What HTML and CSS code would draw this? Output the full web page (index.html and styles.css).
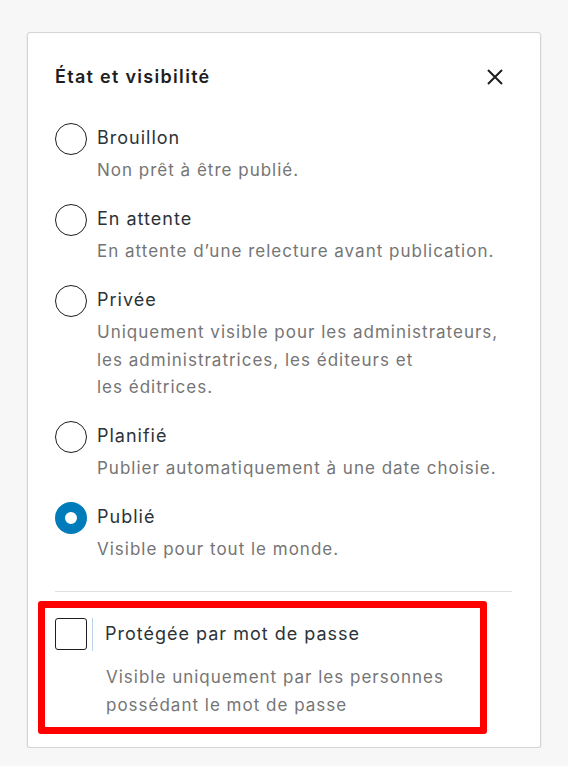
FILE: index.html
```html
<!DOCTYPE html>
<html lang="fr">
<head>
  <meta charset="UTF-8">
  <meta name="viewport" content="width=device-width, initial-scale=1.0">
  <title>État et visibilité</title>
  <link rel="stylesheet" href="styles.css">
</head>
<body>
  <!-- Panneau d'état -->
  <div class="panel">
    <div class="panel-header">
      <h2 class="panel-title">État et visibilité</h2>
      <button class="close-btn" type="button" aria-label="Fermer">
        <svg width="24" height="24" viewBox="0 0 24 24"><path d="M5 5l14 14M19 5L5 19" stroke="#1e1e1e" stroke-width="2" fill="none"/></svg>
      </button>
    </div>

    <div class="option">
      <span class="radio"></span>
      <div class="option-text">
        <div class="option-label">Brouillon</div>
        <div class="option-desc">Non prêt à être publié.</div>
      </div>
    </div>

    <div class="option">
      <span class="radio"></span>
      <div class="option-text">
        <div class="option-label">En attente</div>
        <div class="option-desc">En attente d’une relecture avant publication.</div>
      </div>
    </div>

    <div class="option">
      <span class="radio"></span>
      <div class="option-text">
        <div class="option-label">Privée</div>
        <div class="option-desc">Uniquement visible pour les administrateurs,<br>les administratrices, les éditeurs et<br>les éditrices.</div>
      </div>
    </div>

    <div class="option">
      <span class="radio"></span>
      <div class="option-text">
        <div class="option-label">Planifié</div>
        <div class="option-desc">Publier automatiquement à une date choisie.</div>
      </div>
    </div>

    <div class="option">
      <span class="radio checked"></span>
      <div class="option-text">
        <div class="option-label">Publié</div>
        <div class="option-desc">Visible pour tout le monde.</div>
      </div>
    </div>

    <hr class="divider">

    <!-- Mot de passe -->
    <div class="password-box">
      <div class="password-row">
        <span class="checkbox"></span>
        <span class="checkbox-sep"></span>
        <span class="option-label">Protégée par mot de passe</span>
      </div>
      <div class="password-desc">Visible uniquement par les personnes<br>possédant le mot de passe</div>
    </div>
  </div>
</body>
</html>
```

FILE: styles.css
```css
/* Page */
body {
  margin: 0;
  background-color: #f7f7f7;
  font-family: Inter, "Noto Sans", Arial, sans-serif;
  color: #2c3338;
}

.panel {
  width: 514px;
  box-sizing: border-box;
  margin: 32px 0 0 27px;
  padding: 0 28px 13px 27px;
  background-color: #fff;
  border: 1px solid #d4d4d4;
  border-radius: 3px;
  box-shadow: 0 1px 2px rgba(0, 0, 0, 0.12);
}

.panel-header {
  display: flex;
  align-items: center;
  justify-content: space-between;
  padding-top: 32px;
  margin-bottom: 34px;
}

.panel-title {
  margin: 0;
  font-size: 18px;
  line-height: 24px;
  font-weight: 600;
  letter-spacing: 1.3px;
  color: #1e1e1e;
}

.close-btn {
  display: flex;
  padding: 0;
  margin-right: 5px;
  border: none;
  background: none;
  cursor: pointer;
}

/* Options radio */
.option {
  display: flex;
  align-items: flex-start;
  gap: 10px;
  margin-bottom: 19.5px;
}

.radio {
  flex: none;
  width: 32px;
  height: 32px;
  box-sizing: border-box;
  border: 1.5px solid #1e1e1e;
  border-radius: 50%;
}

.radio.checked {
  border: 10.5px solid #007cba;
  background-color: #fff;
}

.option-text {
  padding-top: 3px;
}

.option-label {
  font-size: 18px;
  line-height: 24px;
  letter-spacing: 1px;
  color: #2c3338;
}

.option-desc {
  margin-top: 7px;
  font-size: 17px;
  line-height: 27.5px;
  letter-spacing: 1px;
  color: #757575;
}

.divider {
  margin: 27px 0 9px;
  border: none;
  border-top: 1px solid #e0e0e0;
}

/* Zone mise en évidence */
.password-box {
  width: 449px;
  box-sizing: border-box;
  margin-left: -17px;
  padding: 10px 0 8px 10px;
  border: 7px solid #ff0000;
  border-radius: 3px;
}

.password-row {
  display: flex;
  align-items: center;
}

.checkbox {
  flex: none;
  width: 32px;
  height: 32px;
  box-sizing: border-box;
  border: 1.5px solid #1e1e1e;
  border-radius: 3px;
}

.checkbox-sep {
  width: 1px;
  height: 33px;
  margin: 0 12px 0 5px;
  background-color: #b8d3ea;
}

.password-desc {
  margin: 12px 0 0 51px;
  font-size: 17px;
  line-height: 28px;
  letter-spacing: 1px;
  color: #757575;
}
```
